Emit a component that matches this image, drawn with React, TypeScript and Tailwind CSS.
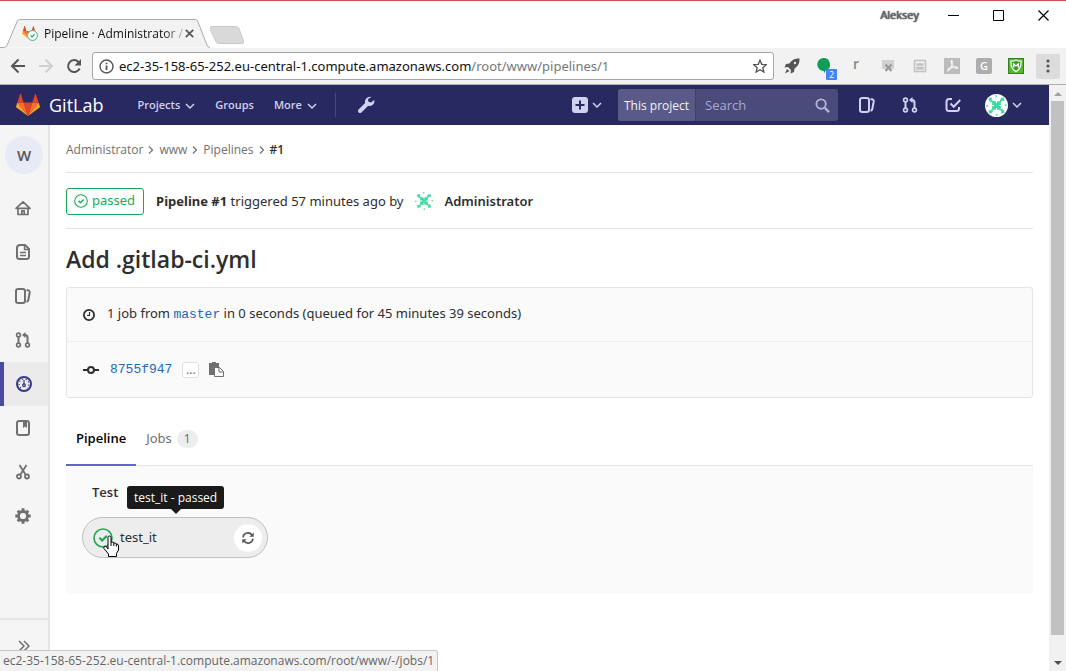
import React from "react";

const sans = "font-['Open_Sans','Noto_Sans',sans-serif]";
const noto = "font-['Noto_Sans','Open_Sans',sans-serif]";
const mono = "font-['Liberation_Mono',monospace]";

type IconProps = { className?: string };

function Svg({ className = "size-4", box = "0 0 16 16", children }: { className?: string; box?: string; children: React.ReactNode }) {
  return (
    <svg viewBox={box} className={"shrink-0 " + className} fill="none" stroke="currentColor" strokeWidth="2" aria-hidden="true">
      {children}
    </svg>
  );
}

const Fox = ({ className }: IconProps) => (
  <svg viewBox="0 0 36 33" className={"shrink-0 " + className} aria-hidden="true">
    <path fill="#e24329" d="M18 33 24.6 12.6H11.4z" />
    <path fill="#fc6d26" d="M18 33 11.4 12.6H2.1z" />
    <path fill="#fca326" d="M2.1 12.6.1 18.8a1.4 1.4 0 0 0 .5 1.5L18 33z" />
    <path fill="#e24329" d="M2.1 12.6h9.3L7.4.4a.7.7 0 0 0-1.3 0z" />
    <path fill="#fc6d26" d="M18 33 24.6 12.6h9.3z" />
    <path fill="#fca326" d="m33.9 12.6 2 6.2a1.4 1.4 0 0 1-.5 1.5L18 33z" />
    <path fill="#e24329" d="M33.9 12.6h-9.3l4-12.2a.7.7 0 0 1 1.3 0z" />
  </svg>
);

const ChevronDown = ({ className = "size-[10px]" }: IconProps) => (
  <Svg className={className} box="0 0 10 10"><path strokeWidth="1.5" d="m1 3 4 4 4-4" /></Svg>
);
const ChevronRight = () => (
  <Svg className="size-2" box="0 0 8 8"><path strokeWidth="1.2" d="m2 .5 3.5 3.5L2 7.5" /></Svg>
);
const Home = () => (
  <Svg><path strokeWidth="1.7" strokeLinejoin="round" d="M1 8.300 8 1.800l7 6.500H1zM3 8.500v6h10v-6M6.800 14v-3.200h2.400V14" /></Svg>
);
const Doc = () => (
  <Svg><path d="M5 1h5l4 4v7.500a2.500 2.500 0 0 1-2.500 2.500h-7A2.500 2.500 0 0 1 2 12.500V4a3 3 0 0 1 3-3z" /><path strokeWidth="1.4" d="M9.500 1v4.500H14M5 8.500h6M5 11.500h6" /></Svg>
);
const Issues = ({ className }: IconProps) => (
  <Svg className={className}><rect x="1" y="1" width="9" height="14" rx="2.200" /><path d="M11.500 2.300h1.500q2 .3 1.700 2.200L13.300 12q-.3 1.500-1.800 1.800" /></Svg>
);
const Merge = ({ className }: IconProps) => (
  <Svg className={className}>
    <g strokeWidth="1.600"><circle cx="3.500" cy="3" r="1.900" /><circle cx="3.500" cy="13" r="1.900" /><circle cx="12.500" cy="13" r="1.900" /></g>
    <path d="M3.500 5v6M12.500 11V5.500q0-2.500-2.500-2.500H9" /><path fill="currentColor" stroke="none" d="M10.500 0v6L7 3z" />
  </Svg>
);
const Gauge = () => (
  <Svg><circle cx="8" cy="8" r="7" /><path strokeWidth="1.200" d="M8 4v4" /><circle cx="8" cy="9.300" r="1.300" strokeWidth="1.300" /><path strokeWidth="1.200" strokeDasharray="1.200 2.200" d="M5 12a5 5 0 1 1 6 0" /></Svg>
);
const Wiki = () => (
  <Svg><rect x="2" y="1" width="12" height="14" rx="2.300" /><path fill="currentColor" stroke="none" d="M8 2h4v6L10 6.500 8 8z" /></Svg>
);
const Snippets = () => (
  <Svg><path strokeWidth="1.800" d="m4.500 1 6 9.500M11.500 1l-6 9.500" /><g strokeWidth="1.800"><circle cx="4" cy="12.500" r="2" /><circle cx="12" cy="12.500" r="2" /></g></Svg>
);
const Gear = () => (
  <Svg>
    <circle cx="8" cy="8" r="4.500" strokeWidth="2.800" />
    <path strokeWidth="3" d="M8 3V.3M8 13v2.700M3 8H.3M13 8h2.700M4.500 4.500 2.700 2.700M11.500 4.500l1.800-1.800M4.500 11.500l-1.800 1.800M11.500 11.500l1.800 1.800" />
  </Svg>
);
const Todo = () => (
  <Svg><path d="M7 2H4a2.500 2.500 0 0 0-2.500 2.500v7A2.500 2.500 0 0 0 4 14h7.500a2.500 2.500 0 0 0 2.500-2.500V10" /><path d="m5.500 6.500 3.200 3.200L15.200 3" /></Svg>
);
const Passed = ({ className }: IconProps) => (
  <Svg className={className} box="0 0 14 14"><circle cx="7" cy="7" r="6.300" strokeWidth="1.100" /><path strokeWidth="1.500" d="m4.500 6.800 1.900 1.900 3.300-3.200" /></Svg>
);
const Wrench = () => (
  <svg viewBox="0 0 18 18" className="size-[18px]" aria-hidden="true">
    <path d="m3 15 7-7" stroke="currentColor" strokeWidth="4" strokeLinecap="round" />
    <path fill="currentColor" d="M14.300.9a5 5 0 0 0-6.100 6.200l2.700 2.700a5 5 0 0 0 6.400-5.700L14 6.500l-2.500-.7-.6-2.500z" />
  </svg>
);

function Identicon({ className }: IconProps) {
  return (
    <svg viewBox="0 0 24 24" className={"shrink-0 rounded-full bg-white " + className} fill="#38dba0" aria-hidden="true">
      {[0, 90, 180, 270].map((a) => (
        <g key={a} transform={`rotate(${a} 12 12)`}>
          <path d="M7.500 7.500h4v4h-4zM3.500 4.500 7 3.500v5L4.500 7.500zM11 .8l2 1.400-2 1.400zM6.500 6l2.500 1.500-1.500 1.500zM11.300 9.500h1.400v2.500h-1.400z" />
        </g>
      ))}
    </svg>
  );
}

function BrowserChrome() {
  return (
    <header className="shrink-0 border-t border-[#cf524d] bg-white">
      <div className="flex h-[47px] items-end justify-between">
        <div className="flex items-end">
          <div className="relative flex h-[29px] w-[210px] items-center pl-[22px]">
            <svg className="absolute inset-0 h-full w-full" viewBox="0 0 212 29" preserveAspectRatio="none" aria-hidden="true">
              <path d="M0 28.500h4q2 0 3-2L17.500 2q.8-1.500 2.500-1.500h177q1.700 0 2.500 1.500L209 26q1 2.500 3 2.500" fill="#f2f2f2" stroke="#aaa" />
            </svg>
            <div className="relative size-4">
              <Fox className="w-[14px]" />
              <span className="absolute left-[5px] top-1 rounded-full bg-white text-[#1aaa55]"><Passed className="size-[11px]" /></span>
            </div>
            <span className="relative ml-[6px] whitespace-nowrap bg-gradient-to-r from-[#111] from-85% to-[#bbb] bg-clip-text text-xs text-transparent">Pipeline · Administrator /</span>
            <button aria-label="Close tab" className="relative ml-[2px] text-[#555]"><Svg className="size-[9px]" box="0 0 9 9"><path strokeWidth="1.700" d="m.8.8 7.400 7.400M8.200.8.8 8.200" /></Svg></button>
          </div>
          <button aria-label="New tab" className="mb-1"><svg className="h-[18px] w-[34px]" viewBox="0 0 34 18"><path d="M1 .5h24q2.500 0 3.500 2L33 15q1 2.500-1 2.500H9q-2.500 0-3.500-2L-.5 3Q-1 .5 1 .5z" transform="translate(.5)" fill="#d9d9d9" stroke="#c8c8c8" /></svg></button>
        </div>
        <div className="flex items-center gap-[29px] self-start pr-[17px] pt-[6px] text-black">
          <span className="text-[11px] text-[#777] [text-shadow:0_0_1px_#222,0_0_1px_#222]">Aleksey</span>
          <div className="flex items-center gap-[34px]">
            <button aria-label="Minimize"><Svg className="size-[11px]" box="0 0 11 11"><path strokeWidth="1" d="M0 5.500h11" /></Svg></button>
            <button aria-label="Maximize"><Svg className="size-[11px]" box="0 0 11 11"><path strokeWidth="1" d="M.5.5h10v10H.5z" /></Svg></button>
            <button aria-label="Close"><Svg className="size-[11px]" box="0 0 11 11"><path strokeWidth="1.200" d="m.5.5 10 10M10.500.5l-10 10" /></Svg></button>
          </div>
        </div>
      </div>
      <div className="flex h-[37px] items-center border-b border-[#b0b0b0] bg-[#f2f2f2] pl-[10px] pr-[6px]">
        <div className="flex items-center gap-3 text-[#555]">
          <button aria-label="Back"><Svg><path d="M15 8H2M8.500 1.500 2 8l6.500 6.500" /></Svg></button>
          <button aria-label="Forward" className="text-[#d0d0d0]"><Svg><path d="M1 8h13M7.500 1.500 14 8l-6.500 6.500" /></Svg></button>
          <button aria-label="Reload"><Svg><path d="M13.600 10.500A6 6 0 1 1 12.500 4" /><path fill="currentColor" stroke="none" d="M15 1v6.500H8.500z" /></Svg></button>
        </div>
        <div className="ml-[10px] flex h-7 min-w-0 flex-1 items-center rounded-[3px] border border-[#a6a6a6] bg-white px-[6px]">
          <Svg className="size-[15px] text-[#555]" box="0 0 15 15"><circle cx="7.500" cy="7.500" r="6.500" strokeWidth="1.400" /><path strokeWidth="1.800" d="M7.500 6.500V11M7.500 3.700v1.600" /></Svg>
          <div className={"relative ml-[5px] flex h-6 min-w-0 flex-1 items-center pt-px text-[13px] " + noto}>
            <input aria-label="Address" defaultValue="ec2-35-158-65-252.eu-central-1.compute.amazonaws.com/root/www/pipelines/1" className="absolute inset-0 w-full bg-transparent text-transparent caret-black outline-none" />
            <span aria-hidden="true" className="pointer-events-none whitespace-nowrap text-[#111]">ec2-35-158-65-252.eu-central-1.compute.amazonaws.com<span className="text-[#777]">/root/www/pipelines/1</span></span>
          </div>
          <button aria-label="Bookmark" className="text-[#555]"><Svg className="size-[14px]"><path strokeWidth="1.500" d="m8 1.300 2 4.800 5.200.4-4 3.400 1.300 5L8 12.200l-4.500 2.700 1.300-5-4-3.400 5.200-.4z" /></Svg></button>
        </div>
        <div className="ml-[10px] flex items-center gap-4">
          <button aria-label="Rocket" className="text-[#555]"><Svg><path fill="currentColor" stroke="none" d="M15.500.5C10 .3 7.500 2.500 5.500 5.500L2 6 .5 9.500 4 9l3 3-.5 3.500L10 14l.5-3.500c3-2 5.200-4.500 5-10zM3 11l-2 4.500L5.500 13z" /><circle cx="11" cy="5" r="1.200" fill="#eee" stroke="none" /></Svg></button>
          <button aria-label="Hangouts" className="relative h-4 w-4">
            <Svg><path fill="#0f9d58" stroke="none" d="M7.500 0a6.500 6.500 0 0 1 2.500 12.500L8 15v-2A6.500 6.500 0 0 1 7.500 0z" /></Svg>
            <span className="absolute left-[10px] top-[11px] h-[11px] w-[11px] rounded-[1px] bg-[#4285f4] text-[9px] leading-[11px] text-white">2</span>
          </button>
          <button aria-label="Extension r" className="w-4 pb-1 text-center text-sm leading-4 font-semibold text-[#888]">r</button>
          <button aria-label="Extension x" className="text-[#999]"><Svg><path fill="#d0d0d0" stroke="none" d="M2 2h12v9H2z" /><path strokeWidth="2.200" d="m5.500 6.500 6 6.500M11.500 6.500l-6 6.500" /></Svg></button>
          <button aria-label="Reader" className="text-[#c2c2c2]"><Svg><rect x="2.500" y="2.500" width="11" height="11" strokeWidth="1.600" /><path strokeWidth="1.400" d="M5 6h6v1H5zM5 9.500h6v1.500H5z" /></Svg></button>
          <button aria-label="PDF" className="text-[#f5f5f5]"><Svg><path fill="#bcbcbc" stroke="none" d="M0 0h16v16H0z" /><path strokeWidth="1.200" d="M3 13c2 .3 6-6 5.300-9.500C7 .8 6.300 5 9 8c2 2.800 5 3 4.500 1.500C12.500 8 7 9.500 3.500 11.500" /></Svg></button>
          <button aria-label="Extension G" className="size-4 rounded-[2px] bg-[#adadad] text-[11px] leading-4 font-semibold text-white">G</button>
          <button aria-label="Shield"><Svg><rect x=".5" y=".5" width="15" height="15" fill="#55b82b" stroke="#3a7d24" strokeWidth="1" /><path d="M8 2q2.500 1.500 5 1 .5 8-5 10.500Q2.500 11 3 3q2.500.5 5-1z" fill="#3e9a28" stroke="#e6f2e0" strokeWidth="1.400" /><path stroke="#fff" strokeWidth="1.300" d="M5.700 9.500V6L8 8l2.300-2v3.500" /></Svg></button>
          <button aria-label="Browser menu" className="-ml-1 flex h-[25px] w-6 items-center justify-center rounded-[2px] bg-[#dcdcdc] text-[#555]"><Svg><g fill="currentColor" stroke="none"><circle cx="8" cy="3" r="1.600" /><circle cx="8" cy="8" r="1.600" /><circle cx="8" cy="13" r="1.600" /></g></Svg></button>
        </div>
      </div>
    </header>
  );
}

function NavBar() {
  return (
    <nav className="flex h-10 shrink-0 items-center bg-[#292961] pl-4 pr-[27px] text-[#d1d1f0]">
      <a href="#" className="flex items-center gap-[9px] text-white"><Fox className="w-6" /><span className="text-lg leading-5">GitLab</span></a>
      <div className="ml-[34px] flex items-center gap-5 pt-px text-[11px] font-semibold">
        <button className="flex items-center gap-[5px]">Projects <ChevronDown /></button>
        <a href="#">Groups</a>
        <button className="flex items-center gap-[5px]">More <ChevronDown /></button>
      </div>
      <span className="ml-[18px] mr-[21px] h-6 w-px bg-[#48487a]" />
      <button aria-label="Admin area"><Wrench /></button>
      <div className="ml-auto flex items-center">
        <button aria-label="New" className="mr-4 flex items-center gap-1">
          <Svg className="size-4"><rect width="16" height="16" rx="3" fill="currentColor" stroke="none" /><path stroke="#292961" d="M8 3.500v9M3.500 8h9" /></Svg>
          <ChevronDown />
        </button>
        <div className="flex h-8 w-[220px] items-center rounded-[3px] bg-[#4a4a7b]">
          <span className="flex h-8 items-center whitespace-nowrap rounded-l-[3px] border-r border-[#3d3d70] bg-[#5a5a88] px-[6px] pt-px text-xs text-[#f2f2fa]">This project</span>
          <input aria-label="Search" placeholder="Search" className="ml-[9px] w-0 min-w-0 flex-1 bg-transparent pt-px text-[13px] outline-none placeholder:text-[#a9a9d0]" />
          <Svg className="mr-2 size-[15px] text-[#b4b4d8]"><circle cx="6.500" cy="6.500" r="5" /><path strokeWidth="2.500" d="m10.500 10.500 4.500 4.500" /></Svg>
        </div>
        <div className="ml-[21px] flex items-center gap-[27px]">
          <a href="#" aria-label="Issues"><Issues /></a>
          <a href="#" aria-label="Merge requests"><Merge /></a>
          <a href="#" aria-label="Todos"><Todo /></a>
        </div>
        <button aria-label="User menu" className="ml-6 flex items-center gap-1"><Identicon className="size-[23px]" /><ChevronDown /></button>
      </div>
    </nav>
  );
}

function Sidebar() {
  const before = [["Overview", <Home />], ["Repository", <Doc />], ["Issues", <Issues />], ["Merge requests", <Merge />]] as const;
  const after = [["Wiki", <Wiki />], ["Snippets", <Snippets />], ["Settings", <Gear />]] as const;
  const row = "flex h-11 items-center justify-center";
  return (
    <aside className="flex w-[50px] shrink-0 flex-col border-r-2 border-[#e5e5e5] bg-[#f5f5f5] text-[#707070]">
      <a href="#" className="mx-auto mt-[11px] mb-3 flex size-[38px] items-center justify-center rounded-full bg-[#e8eaf6] text-[15px] font-semibold text-[#555]">W</a>
      <div className="pr-[2px]">
        {before.map(([n, icon]) => <a key={n} href="#" aria-label={n} className={row}>{icon}</a>)}
      </div>
      <a href="#" aria-label="CI / CD" className="flex h-11 items-center justify-center border-l-4 border-[#4b4ba3] bg-[#ebebeb] pr-1 text-[#393982]"><Gauge /></a>
      <div className="pr-[2px]">
        {after.map(([n, icon]) => <a key={n} href="#" aria-label={n} className={row}>{icon}</a>)}
      </div>
      <button aria-label="Expand sidebar" className="mt-auto flex h-[53px] items-center justify-center border-t-2 border-[#e5e5e5]"><Svg className="size-3" box="0 0 12 12"><path strokeWidth="1.500" d="m1 1 5 5-5 5M6 1l5 5-5 5" /></Svg></button>
    </aside>
  );
}

function Cursor() {
  return (
    <svg viewBox="0 0 17 22" className="absolute left-5 top-[17px] h-[22px] w-[17px]" aria-hidden="true">
      <path d="M5 14V2.500a1.500 1.500 0 0 1 3 0V7q2.500-.5 2.800 1 2.200-.3 2.500 1 2.200-.3 2.200 2v4l-2 3.500v3h-8v-2.500L1 13.500q-.8-2.300 1-2.500 1.500.3 3 3z" fill="#fff" stroke="#000" />
      <path d="M8 7v4M10.800 8v3M13.300 9v2.500" stroke="#000" fill="none" />
    </svg>
  );
}

function Content() {
  return (
    <main className={"min-w-0 flex-1 px-4 text-[#2e2e2e] " + noto}>
      <nav aria-label="Breadcrumb" className={"flex h-12 items-center gap-1 border-b border-[#e5e5e5] pt-[2px] text-xs text-[#707070] " + sans}>
        <a href="#">Administrator</a><ChevronRight /><a href="#">www</a><ChevronRight /><a href="#">Pipelines</a><ChevronRight /><a href="#" className="font-semibold text-[#2e2e2e]">#1</a>
      </nav>
      <div className="flex h-14 items-center border-b border-[#e5e5e5] pt-px text-[13px]">
        <a href="#" className="flex h-[27px] items-center gap-1 rounded-[3px] border border-[#1aaa55] px-[7px] pr-2 text-[#1aaa55]"><Passed className="size-[14px]" />passed</a>
        <span className="ml-3 pt-px"><strong className="font-bold">Pipeline #1</strong> triggered 57 minutes ago by</span>
        <Identicon className="ml-[10px] size-5" />
        <a href="#" className="ml-[11px] pt-px font-semibold">Administrator</a>
      </div>
      <h3 className={"pt-[14px] pb-3 text-[23px] leading-8 font-semibold " + sans}>Add .gitlab-ci.yml</h3>
      <section className="rounded-[3px] border border-[#e5e5e5] bg-[#fafafa] text-[13px]">
        <div className="flex h-[54px] items-center border-b border-[#ededed] px-4">
          <Svg className="size-3" box="0 0 12 12"><circle cx="6" cy="6" r="5.100" strokeWidth="1.800" /><path strokeWidth="1.200" d="M6.500 3v3.500H4" /></Svg>
          <p className="ml-3 whitespace-pre">1 job from <a href="#" className={"text-[#1b69b6] " + mono}>master</a> in 0 seconds (queued for 45 minutes 39 seconds)</p>
        </div>
        <div className="flex h-[55px] items-center px-4">
          <Svg className="h-[10px] w-4" box="0 0 16 10"><circle cx="8" cy="5" r="3" /><path d="M0 5h5M11 5h5" /></Svg>
          <a href="#" className={"ml-[11px] text-[#1b69b6] " + mono}>8755f947</a>
          <button aria-label="Expand commit" className="ml-[10px] h-4 w-[17px] rounded-[3px] border border-[#e0e0e0] bg-white text-xs leading-[12px] text-[#707070]">...</button>
          <button aria-label="Copy commit SHA" className="ml-[10px]"><svg viewBox="0 0 15 15" className="size-[15px]"><path fill="#707070" d="M0 1h3V0h4v1h3v4H6v8H0z" /><path fill="#fff" stroke="#707070" d="M5.500 5.500h5l4 4v5h-9zM10 5.500V10h4.500" /></svg></button>
        </div>
      </section>
      <div role="tablist" className="mt-[15px] flex h-[53px] border-b border-[#e5e5e5] text-[13px]">
        <button role="tab" aria-selected="true" className={"-mb-px border-b-2 border-[#6666c4] px-[10px] font-semibold text-black " + sans}>Pipeline</button>
        <button role="tab" aria-selected="false" className="flex items-center gap-[5px] px-[10px] text-[#707070]">Jobs <span className="rounded-full bg-[#ededed] px-[7px] text-xs leading-[18px]">1</span></button>
      </div>
      <section className="h-32 bg-[#fafafa] px-4 pt-4">
        <h4 className={"ml-[10px] text-[13px] leading-5 font-semibold " + sans}>Test</h4>
        <div className="relative mt-[15px] flex h-[41px] w-[186px] items-center rounded-full border border-[#bfbfbf] bg-[#ededed] pl-[10px] pr-[5px]">
          <a href="#" className="flex flex-1 items-center gap-[7px] text-[13px]"><span className="text-[#1aaa55]"><Passed className="size-5" /></span>test_it</a>
          <button aria-label="Retry" className="flex size-7 items-center justify-center rounded-full bg-white text-[#555]">
            <Svg className="size-3" box="0 0 12 12"><path strokeWidth="1.600" d="M1 5.300A5 5 0 0 1 10 3M11 6.700A5 5 0 0 1 2 9" /><path fill="currentColor" stroke="none" d="M11.700.5v4.300H7.400zM.3 11.500V7.200h4.300z" /></Svg>
          </button>
          <div role="tooltip" className={"absolute bottom-12 left-11 whitespace-nowrap rounded-[3px] bg-[#1a1a1a] px-[7px] text-xs leading-[23px] text-white " + sans}>
            test_it - passed
            <span className="absolute left-1/2 top-full -translate-x-1/2 border-x-[5px] border-t-[5px] border-x-transparent border-t-[#1a1a1a]" />
          </div>
          <Cursor />
        </div>
      </section>
    </main>
  );
}

export default function App() {
  return (
    <div className={"flex h-screen flex-col overflow-hidden bg-white " + sans}>
      <BrowserChrome />
      <div className="flex min-h-0 flex-1">
        <div className="flex min-w-0 flex-1 flex-col">
          <NavBar />
          <div className="flex min-h-0 flex-1"><Sidebar /><Content /></div>
        </div>
        <div aria-hidden="true" className="flex w-[17px] flex-col items-center bg-[#f1f1f1]">
          <span className="mt-[7px] mb-[5px] border-x-[4px] border-b-[4px] border-x-transparent border-b-[#a3a3a3]" />
          <span className="w-[13px] flex-1 bg-[#c1c1c1]" />
          <span className="mt-[26px] mb-[6px] border-x-[4px] border-t-[4px] border-x-transparent border-t-[#505050]" />
        </div>
      </div>
      <div className={"fixed bottom-0 left-0 h-[21px] rounded-tr-[3px] border-t border-r border-[#c8c8c8] bg-[#f2f2f2] px-[3px] text-xs leading-5 text-[#666] " + sans}>ec2-35-158-65-252.eu-central-1.compute.amazonaws.com/root/www/-/jobs/1</div>
    </div>
  );
}
